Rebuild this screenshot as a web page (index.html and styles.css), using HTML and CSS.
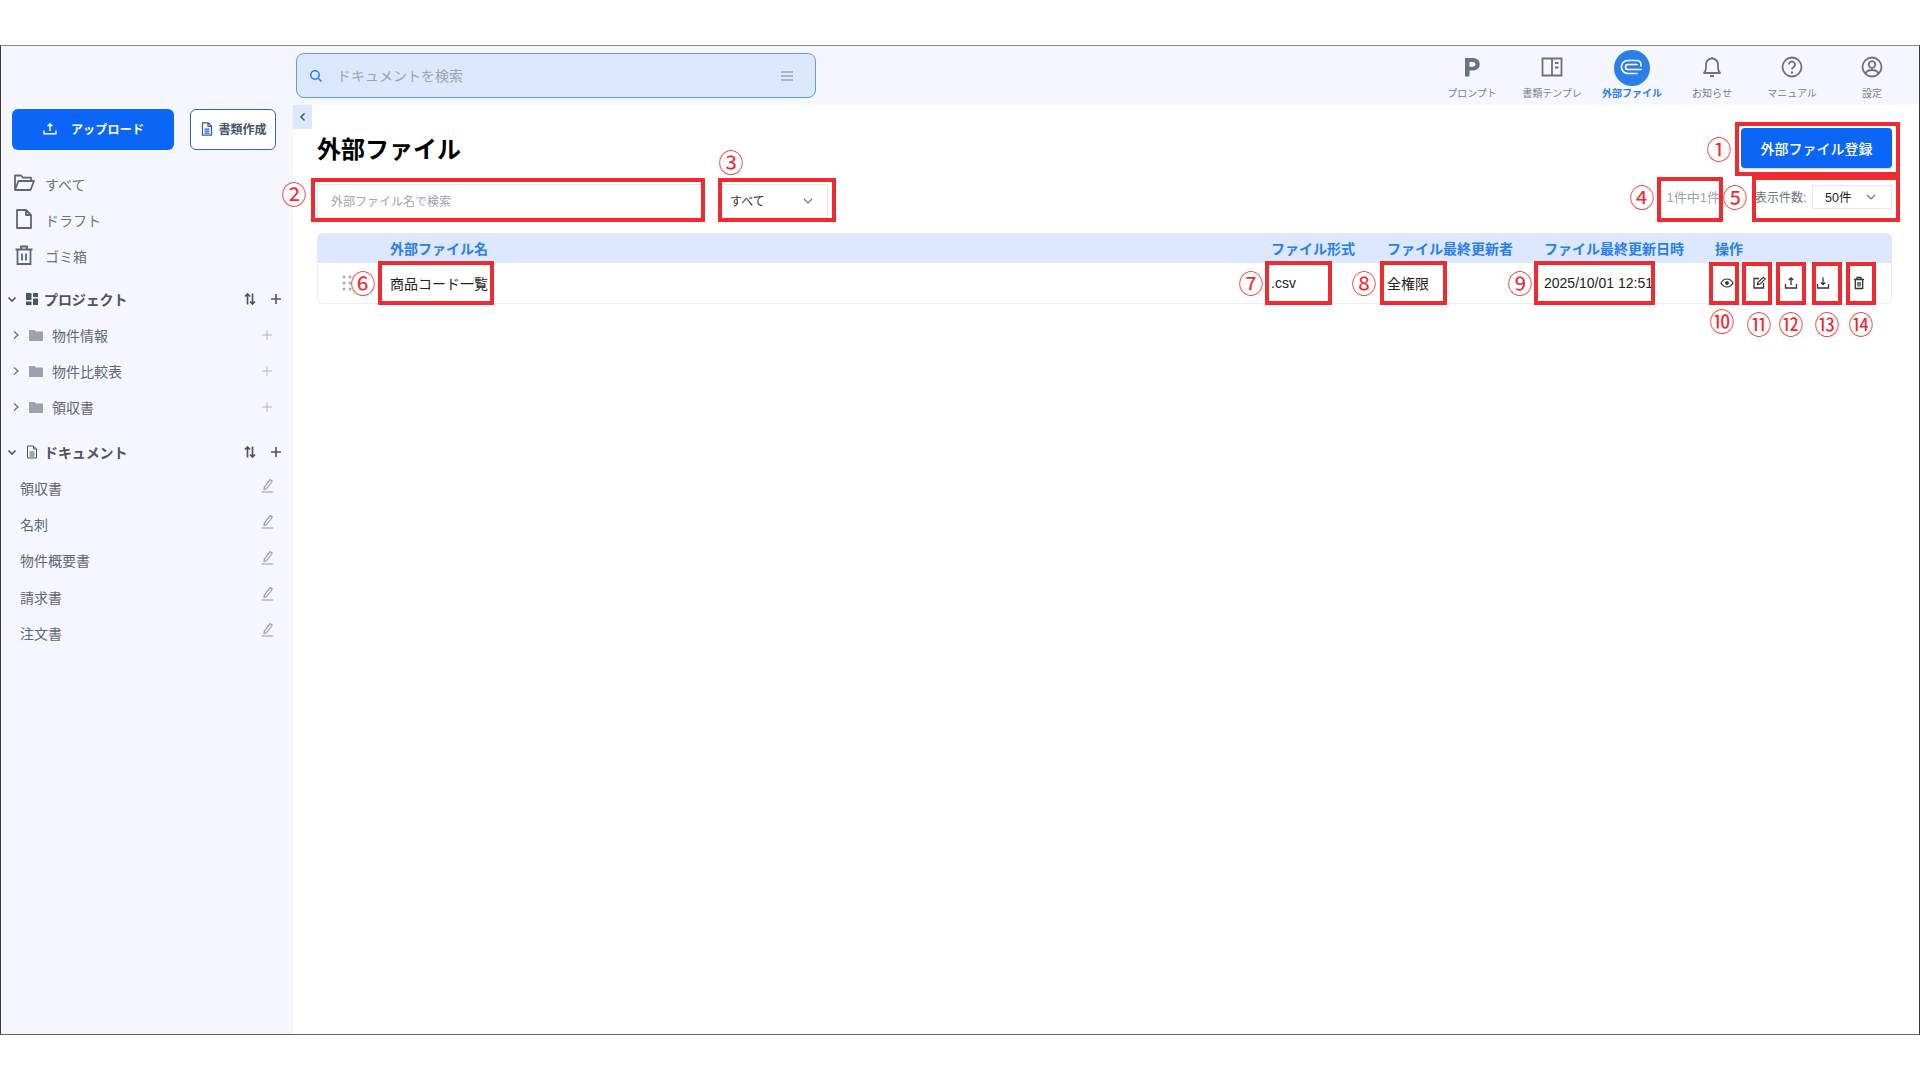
FILE: index.html
```html
<!DOCTYPE html>
<html lang="ja">
<head>
<meta charset="utf-8">
<title>外部ファイル</title>
<link rel="stylesheet" href="styles.css">
</head>
<body>
<div class="frame">
  <aside class="sidebar">
    <div class="actions">
      <button class="btn-upload">
        <svg class="ic16" viewBox="0 0 16 16"><path d="M8 10V3M5.500 5.200 8 2.800l2.500 2.400M2 9.500v3.200h12V9.500" fill="none" stroke="currentColor" stroke-width="1.400"/></svg>
        <span>アップロード</span>
      </button>
      <button class="btn-doc">
        <svg class="ic16" viewBox="0 0 16 16"><path d="M3.500 1.800h5.800l3.200 3.200v9.200h-9zM9 2v3.400h3.400M5.500 8.200h5M5.500 10.200h5M5.500 12.200h5" fill="none" stroke="currentColor" stroke-width="1.200"/></svg>
        <span>書類作成</span>
      </button>
    </div>
    <nav class="main-nav">
      <a class="nav-row"><svg class="ic22" viewBox="0 0 22 22"><path d="M2 18V3.500h6l2 2.200h8V9M2 18h15.500L21 9H5.500L2 18z" fill="none" stroke="#5f6675" stroke-width="1.800" stroke-linejoin="round"/></svg><span>すべて</span></a>
      <a class="nav-row"><svg class="ic22" viewBox="0 0 22 22"><path d="M4 2h9l5 5v13H4zM13 2v5h5" fill="none" stroke="#5f6675" stroke-width="1.800" stroke-linejoin="round"/></svg><span>ドラフト</span></a>
      <a class="nav-row"><svg class="ic22" viewBox="0 0 22 22"><path d="M2.500 5.500h17M8 5V2.500h6V5M4.500 6v14h13V6M9 9.500v7M13 9.500v7" fill="none" stroke="#5f6675" stroke-width="1.800"/></svg><span>ゴミ箱</span></a>
    </nav>
    <div class="sec-head">
      <svg class="chev" viewBox="0 0 10 10"><path d="M1.500 3.500 5 7l3.500-3.500" fill="none" stroke="currentColor" stroke-width="1.600"/></svg>
      <svg class="sec-ic" viewBox="0 0 14 14"><path d="M1 1h5.500v7H1zM8 1h5v4H8zM1 9.500h5.500V13H1zM8 6.500h5V13H8z" fill="#4b5563"/></svg>
      <span class="sec-title">プロジェクト</span>
      <svg class="sort" viewBox="0 0 14 14"><path d="M4.500 12.500V2M2 4.500 4.500 2 7 4.500M9.500 1.500V12M7 9.500 9.500 12 12 9.500" fill="none" stroke="currentColor" stroke-width="1.700"/></svg>
      <svg class="plus" viewBox="0 0 12 12"><path d="M6 1v10M1 6h10" stroke="currentColor" stroke-width="1.600"/></svg>
    </div>
    <div class="folder"><svg class="chev-r" viewBox="0 0 10 10"><path d="M3 1.500 7 5 3 8.500" fill="none" stroke="currentColor" stroke-width="1.300"/></svg><svg class="folder-ic" viewBox="0 0 14 12"><path d="M0 1h5.500l1.300 1.500H14V12H0z" fill="#9ca3af"/></svg><span>物件情報</span><svg class="plus-sm" viewBox="0 0 12 12"><path d="M6 1v10M1 6h10" stroke="currentColor"/></svg></div>
    <div class="folder"><svg class="chev-r" viewBox="0 0 10 10"><path d="M3 1.500 7 5 3 8.500" fill="none" stroke="currentColor" stroke-width="1.300"/></svg><svg class="folder-ic" viewBox="0 0 14 12"><path d="M0 1h5.500l1.300 1.500H14V12H0z" fill="#9ca3af"/></svg><span>物件比較表</span><svg class="plus-sm" viewBox="0 0 12 12"><path d="M6 1v10M1 6h10" stroke="currentColor"/></svg></div>
    <div class="folder"><svg class="chev-r" viewBox="0 0 10 10"><path d="M3 1.500 7 5 3 8.500" fill="none" stroke="currentColor" stroke-width="1.300"/></svg><svg class="folder-ic" viewBox="0 0 14 12"><path d="M0 1h5.500l1.300 1.500H14V12H0z" fill="#9ca3af"/></svg><span>領収書</span><svg class="plus-sm" viewBox="0 0 12 12"><path d="M6 1v10M1 6h10" stroke="currentColor"/></svg></div>
    <div class="sec-head sec-docs">
      <svg class="chev" viewBox="0 0 10 10"><path d="M1.500 3.500 5 7l3.500-3.500" fill="none" stroke="currentColor" stroke-width="1.600"/></svg>
      <svg class="sec-ic" viewBox="0 0 14 14"><path d="M2.500 1h6l3 3v9h-9zM8.500 1v3h3M4.500 7h5M4.500 9h5M4.500 11h5" fill="none" stroke="#4b5563" stroke-width="1"/></svg>
      <span class="sec-title">ドキュメント</span>
      <svg class="sort" viewBox="0 0 14 14"><path d="M4.500 12.500V2M2 4.500 4.500 2 7 4.500M9.500 1.500V12M7 9.500 9.500 12 12 9.500" fill="none" stroke="currentColor" stroke-width="1.700"/></svg>
      <svg class="plus" viewBox="0 0 12 12"><path d="M6 1v10M1 6h10" stroke="currentColor" stroke-width="1.600"/></svg>
    </div>
    <div class="doc"><span>領収書</span><svg class="edit" viewBox="0 0 12 14"><path d="M3 8.500 8.500 1.500l2 1.500-5.500 7-2.300.7zM.5 13h11" fill="none" stroke="currentColor"/></svg></div>
    <div class="doc"><span>名刺</span><svg class="edit" viewBox="0 0 12 14"><path d="M3 8.500 8.500 1.500l2 1.500-5.500 7-2.300.7zM.5 13h11" fill="none" stroke="currentColor"/></svg></div>
    <div class="doc"><span>物件概要書</span><svg class="edit" viewBox="0 0 12 14"><path d="M3 8.500 8.500 1.500l2 1.500-5.500 7-2.300.7zM.5 13h11" fill="none" stroke="currentColor"/></svg></div>
    <div class="doc"><span>請求書</span><svg class="edit" viewBox="0 0 12 14"><path d="M3 8.500 8.500 1.500l2 1.500-5.500 7-2.300.7zM.5 13h11" fill="none" stroke="currentColor"/></svg></div>
    <div class="doc"><span>注文書</span><svg class="edit" viewBox="0 0 12 14"><path d="M3 8.500 8.500 1.500l2 1.500-5.500 7-2.300.7zM.5 13h11" fill="none" stroke="currentColor"/></svg></div>
  </aside>

  <header class="topbar">
    <div class="search">
      <svg class="search-ic" viewBox="0 0 14 14"><circle cx="6" cy="6" r="4.200" fill="none" stroke="#2b7de9" stroke-width="1.500"/><path d="m9.200 9.200 3.300 3.300" stroke="#2b7de9" stroke-width="1.500"/></svg>
      <span class="search-text">ドキュメントを検索</span>
      <svg class="menu-ic" viewBox="0 0 12 10"><path d="M0 1h12M0 5h12M0 9h12" stroke="#9ca3af" stroke-width="1.300"/></svg>
    </div>
    <nav class="tools">
      <a class="tool"><svg class="tool-ic" viewBox="0 0 24 24"><path d="M5 21.500V3h8.500a6 6 0 0 1 0 12.500H9.500v6zM9.500 7v4.700h3.700a2.350 2.350 0 0 0 0-4.700z" fill="#6b7280" fill-rule="evenodd"/></svg><span>プロンプト</span></a>
      <a class="tool"><svg class="tool-ic" viewBox="0 0 24 24"><path d="M2.500 3.500h19v17h-19zM12 3.500v17M15 8h3.500M15 12.500h3.500" fill="none" stroke="#6b7280" stroke-width="1.800"/></svg><span>書類テンプレ</span></a>
      <a class="tool active"><span class="tool-badge"><svg viewBox="0 0 24 24"><path d="M21 13.500H8a2.500 2.500 0 0 1 0-5h9" fill="none" stroke="#fff" stroke-width="1.600" stroke-linecap="round"/><path d="M17 17.500H8a6.500 6.500 0 0 1-.2-13H17a4.500 4.500 0 0 1 4 4.500v1" fill="none" stroke="#fff" stroke-width="1.600" stroke-linecap="round"/></svg></span><span>外部ファイル</span></a>
      <a class="tool"><svg class="tool-ic" viewBox="0 0 24 24"><path d="M4 18c1.500-1.500 2-3 2-5V9.500a6 6 0 0 1 12 0V13c0 2 .5 3.500 2 5zM10 21h4M12 2v1.500" fill="none" stroke="#6b7280" stroke-width="1.800" stroke-linejoin="round"/></svg><span>お知らせ</span></a>
      <a class="tool"><svg class="tool-ic" viewBox="0 0 24 24"><circle cx="12" cy="12" r="9.500" fill="none" stroke="#6b7280" stroke-width="1.800"/><path d="M9 9.500a3 3 0 1 1 4.500 2.600c-1 .6-1.500 1.200-1.500 2.400" fill="none" stroke="#6b7280" stroke-width="1.800"/><circle cx="12" cy="17.500" r="1.200" fill="#6b7280"/></svg><span>マニュアル</span></a>
      <a class="tool"><svg class="tool-ic" viewBox="0 0 24 24"><circle cx="12" cy="12" r="9.500" fill="none" stroke="#6b7280" stroke-width="1.800"/><circle cx="12" cy="9.500" r="3.300" fill="none" stroke="#6b7280" stroke-width="1.800"/><path d="M5.500 18.500c1.200-2.600 3.500-3.500 6.500-3.500s5.300.9 6.500 3.500" fill="none" stroke="#6b7280" stroke-width="1.800"/></svg><span>設定</span></a>
    </nav>
  </header>

  <main class="content">
    <button class="collapse"><svg viewBox="0 0 10 10"><path d="M6.500 1.500 3 5l3.500 3.500" fill="none" stroke="#4b5563" stroke-width="1.500"/></svg></button>
    <div class="title-row">
      <h1>外部ファイル</h1>
      <button class="btn-register">外部ファイル登録</button>
    </div>
    <div class="filter-row">
      <div class="filter-input">外部ファイル名で検索</div>
      <div class="select select-all"><span>すべて</span><svg class="sel-chev" viewBox="0 0 12 12"><path d="M2 4l4 4 4-4" fill="none" stroke="currentColor" stroke-width="1.100"/></svg></div>
      <div class="count">1件中1件</div>
      <label class="per-label">表示件数:</label>
      <div class="select select-num"><span>50件</span><svg class="sel-chev" viewBox="0 0 12 12"><path d="M2 4l4 4 4-4" fill="none" stroke="currentColor" stroke-width="1.100"/></svg></div>
    </div>
    <div class="table">
      <div class="thead">
        <span></span><span>外部ファイル名</span><span>ファイル形式</span><span>ファイル最終更新者</span><span>ファイル最終更新日時</span><span>操作</span>
      </div>
      <div class="trow">
        <span class="handle"><svg viewBox="0 0 10 16"><g fill="#a3aab8"><circle cx="2" cy="2" r="1.500"/><circle cx="8" cy="2" r="1.500"/><circle cx="2" cy="8" r="1.500"/><circle cx="8" cy="8" r="1.500"/><circle cx="2" cy="14" r="1.500"/><circle cx="8" cy="14" r="1.500"/></g></svg></span>
        <span>商品コード一覧</span>
        <span>.csv</span>
        <span>全権限</span>
        <span>2025/10/01 12:51</span>
        <span class="ops">
          <svg viewBox="0 0 14 14"><path d="M1 7c1.500-2.800 3.500-4 6-4s4.500 1.200 6 4c-1.500 2.800-3.500 4-6 4S2.500 9.800 1 7z" fill="none" stroke="#333" stroke-width="1.200"/><circle cx="7" cy="7" r="1.900" fill="#333"/></svg>
          <svg viewBox="0 0 14 14"><path d="M7 2.500H2v9.500h9.500V7" fill="none" stroke="#333" stroke-width="1.300"/><path d="M5.500 8.500 6 6.300l5.300-5 1.800 1.800-5.300 5z" fill="none" stroke="#333" stroke-width="1.200"/></svg>
          <svg viewBox="0 0 14 14"><path d="M7 9V2M4.800 4 7 1.800 9.200 4M1.500 8v4h11V8" fill="none" stroke="#333" stroke-width="1.300"/></svg>
          <svg viewBox="0 0 14 14"><path d="M7 1.500v7M4.800 6.500 7 8.700l2.200-2.200M1.500 8v4h11V8" fill="none" stroke="#333" stroke-width="1.300"/></svg>
          <svg class="op-trash" viewBox="0 0 14 14"><path d="M2 3.500h10M5 3V1.500h4V3M3.300 4v8.500h7.400V4M6 6v4.500M8 6v4.500" fill="none" stroke="#333" stroke-width="1.300"/></svg>
        </span>
      </div>
    </div>
  </main>
</div>

<div class="annot b1"></div><div class="annot b2"></div><div class="annot b3"></div><div class="annot b4"></div><div class="annot b5"></div><div class="annot b6"></div><div class="annot b7"></div><div class="annot b8"></div><div class="annot b9"></div><div class="annot b10"></div><div class="annot b11"></div><div class="annot b12"></div><div class="annot b13"></div><div class="annot b14"></div>
<span class="num n1">①</span><span class="num n2">②</span><span class="num n3">③</span><span class="num n4">④</span><span class="num n5">⑤</span><span class="num n6">⑥</span><span class="num n7">⑦</span><span class="num n8">⑧</span><span class="num n9">⑨</span><span class="num n10">⑩</span><span class="num n11">⑪</span><span class="num n12">⑫</span><span class="num n13">⑬</span><span class="num n14">⑭</span>
</body>
</html>
```

FILE: styles.css
```css
* { box-sizing: border-box; }
html, body { margin: 0; padding: 0; background: #fff; }
body {
  width: 1920px; height: 1080px; position: relative; overflow: hidden;
  font-family: "Liberation Sans", "Noto Sans CJK JP", sans-serif; color: #222;
}
button { font-family: inherit; cursor: pointer; }
svg { display: block; flex: none; }

.frame {
  margin-top: 45px; height: 990px;
  border: 1px solid #3a3a3a; border-top-color: #8a8a8a; border-bottom-color: #666;
  display: grid; grid-template-columns: 292px 1fr; grid-template-rows: 59px 1fr;
  background: #f6f7fe;
}
.sidebar { grid-row: 1 / 3; padding-top: 63px; padding-left: 11px; background: #f6f7fe; display: flex; flex-direction: column; }

.actions { display: flex; gap: 16px; }
.ic16 { width: 16px; height: 16px; }
.btn-upload {
  width: 162px; height: 41px; border: 0; border-radius: 6px; background: #0b66f5; color: #fff;
  display: flex; align-items: center; justify-content: center; gap: 13px; padding: 0 0 2px;
  font-size: 12px; font-weight: 700; letter-spacing: .2px;
}
.btn-doc {
  width: 86px; height: 41px; border: 1px solid #2f66b8; border-radius: 6px; background: #fff;
  display: flex; align-items: center; justify-content: center; gap: 3px; padding: 0 0 2px;
  font-size: 12px; font-weight: 700; color: #44546e;
}
.btn-doc svg { color: #2d5ea8; }

.main-nav { margin-top: 16px; margin-left: 1px; display: flex; flex-direction: column; }
.nav-row { height: 36px; display: flex; align-items: center; gap: 10px; font-size: 14px; color: #6b7280; }
.ic22 { width: 22px; height: 22px; margin-top: -3px; }

.sec-head { height: 36px; margin-top: 7px; display: flex; align-items: center; color: #4b5563; }
.sec-docs { margin-top: 9px; }
.chev { width: 10px; height: 10px; margin-left: -5px; }
.sec-ic { width: 14px; height: 14px; margin-left: 8px; }
.sec-title { margin-left: 5px; font-size: 14px; font-weight: 700; width: 199px; letter-spacing: -.1px; }
.sort { width: 14px; height: 14px; }
.plus { width: 12px; height: 12px; margin-left: 13px; }

.folder { height: 36px; display: flex; align-items: center; font-size: 14px; color: #5f6675; }
.chev-r { width: 10px; height: 10px; color: #6b7280; margin-left: -1px; }
.folder-ic { width: 14px; height: 12px; margin-left: 8px; }
.folder span { margin-left: 9px; width: 200px; }
.plus-sm { width: 12px; height: 12px; color: #b2b7c2; margin-left: auto; margin-right: 20px; }

.doc { height: 36.200px; display: flex; align-items: center; justify-content: space-between; padding: 0 19px 0 8px; font-size: 14px; color: #5f6675; }
.edit { width: 13px; height: 15px; color: #9097a4; margin-top: -6px; }

.topbar { display: flex; align-items: flex-start; padding: 7px 0 0 3px; background: #f6f7fe; }
.search {
  width: 520px; height: 45px; border: 1px solid #5b9bf0; border-radius: 8px; background: #dce8fd;
  display: flex; align-items: center; padding: 0 22px 0 12px;
}
.search-ic { width: 14px; height: 14px; }
.search-text { margin-left: 14px; font-size: 14px; color: #9ca3af; flex: 1; margin-top: -1px; }
.menu-ic { width: 12px; height: 10px; }

.tools { margin-left: auto; padding-right: 7px; margin-top: -2px; display: flex; }
.tool { width: 80px; display: flex; flex-direction: column; align-items: center; font-size: 10px; line-height: 15px; color: #7b818d; white-space: nowrap; }
.tool-ic { width: 24px; height: 24px; margin: 4px 0 7px; }
.tool-badge { width: 36px; height: 36px; margin-top: -1px; border-radius: 50%; background: #2a7fe8; display: flex; align-items: center; justify-content: center; }
.tool-badge svg { width: 24px; height: 24px; }
.tool.active { color: #2a7fe8; font-weight: 700; }

.content { background: #fff; position: relative; padding: 0 27px 0 24px; }
.collapse { position: absolute; left: 0; top: 0; width: 19px; height: 24px; padding: 0 4px; border: 0; background: #dce8fd; display: flex; align-items: center; justify-content: center; }
.collapse svg { width: 10px; height: 10px; }

.title-row { display: flex; justify-content: space-between; align-items: center; padding-top: 23px; height: 63px; }
h1 { margin: 4px 0 0; font-size: 24px; line-height: 38px; font-weight: 700; color: #000; }
.btn-register { width: 151px; height: 40px; border: 0; border-radius: 4px; background: #0b66f5; color: #fff; font-size: 14px; font-weight: 500; padding: 0; box-shadow: 0 1px 2px rgba(0,0,0,.2); }

.filter-row { display: flex; align-items: center; margin-top: 16px; height: 34px; }
.filter-input { width: 386px; height: 34px; border: 1px solid #e5e7eb; background: #fff; padding: 1px 13px 0; font-size: 12px; line-height: 33px; color: #9ca3af; }
.select { border: 1px solid #e5e7eb; background: #fff; display: flex; align-items: center; justify-content: space-between; font-size: 12px; color: #333; }
.sel-chev { width: 12px; height: 12px; color: #6b7280; }
.select-all { width: 107px; height: 34px; margin-left: 18px; padding: 0 13px 0 8px; margin-top: -1px; }
.count { margin-left: auto; font-size: 13px; color: #9ca3af; }
.per-label { margin-left: 35px; font-size: 12px; color: #6b7280; width: 54px; white-space: nowrap; }
.select-num { width: 80px; height: 24px; margin-left: 3px; padding: 0 14px 0 12px; margin-top: -9px; color: #222; font-size: 12.500px; }
.count, .per-label { margin-top: -9px; }

.table { margin-top: 15px; }
.thead, .trow { display: grid; align-items: center; }
.thead { grid-template-columns: 73px 881px 116px 157px 171px 1fr; height: 30px; background: #dce8fd; border-radius: 6px 6px 0 0; font-size: 14px; font-weight: 700; color: #2a7fe8; white-space: nowrap; }
.trow { grid-template-columns: 72px 881px 116px 157px 171px 1fr; height: 41px; border: 1px solid #e6edfa; border-top: 0; border-radius: 0 0 6px 6px; font-size: 14px; color: #222; white-space: nowrap; }
.handle { padding-left: 24px; }
.handle svg { width: 10px; height: 16px; }
.ops { display: flex; align-items: center; padding-left: 5px; gap: 18px; }
.ops svg { width: 14px; height: 14px; }
.ops .op-trash { margin-left: 4px; }

.annot { position: absolute; border: 4px solid #ee2b30; pointer-events: none; }
.b1 { left: 1735px; top: 122px; width: 165px; height: 54px; }
.b2 { left: 311px; top: 178px; width: 394px; height: 44px; }
.b3 { left: 718px; top: 178px; width: 118px; height: 44px; }
.b4 { left: 1657px; top: 177px; width: 66px; height: 45px; }
.b5 { left: 1752px; top: 176px; width: 148px; height: 46px; }
.b6 { left: 378px; top: 261px; width: 116px; height: 44px; }
.b7 { left: 1265px; top: 261px; width: 67px; height: 44px; }
.b8 { left: 1380px; top: 261px; width: 67px; height: 44px; }
.b9 { left: 1534px; top: 261px; width: 121px; height: 44px; }
.b10 { left: 1709px; top: 262px; width: 30px; height: 43px; }
.b11 { left: 1742px; top: 262px; width: 30px; height: 43px; }
.b12 { left: 1776px; top: 262px; width: 30px; height: 43px; }
.b13 { left: 1812px; top: 262px; width: 30px; height: 43px; }
.b14 { left: 1846px; top: 262px; width: 30px; height: 43px; }

.num { position: absolute; width: 30px; margin-left: -15px; margin-top: -15px; height: 30px; line-height: 30px; text-align: center; font-family: "Noto Sans CJK JP", sans-serif; font-size: 25px; color: #ee2b30; }
.n1 { left: 1719px; top: 148px; }
.n2 { left: 294px; top: 193px; }
.n3 { left: 731px; top: 161px; }
.n4 { left: 1642px; top: 196px; }
.n5 { left: 1735px; top: 196px; }
.n6 { left: 363px; top: 282px; }
.n7 { left: 1251px; top: 282px; }
.n8 { left: 1364px; top: 282px; }
.n9 { left: 1520px; top: 282px; }
.n10 { left: 1722px; top: 320px; }
.n11 { left: 1759px; top: 323px; }
.n12 { left: 1791px; top: 323px; }
.n13 { left: 1827px; top: 323px; }
.n14 { left: 1861px; top: 323px; }
```
